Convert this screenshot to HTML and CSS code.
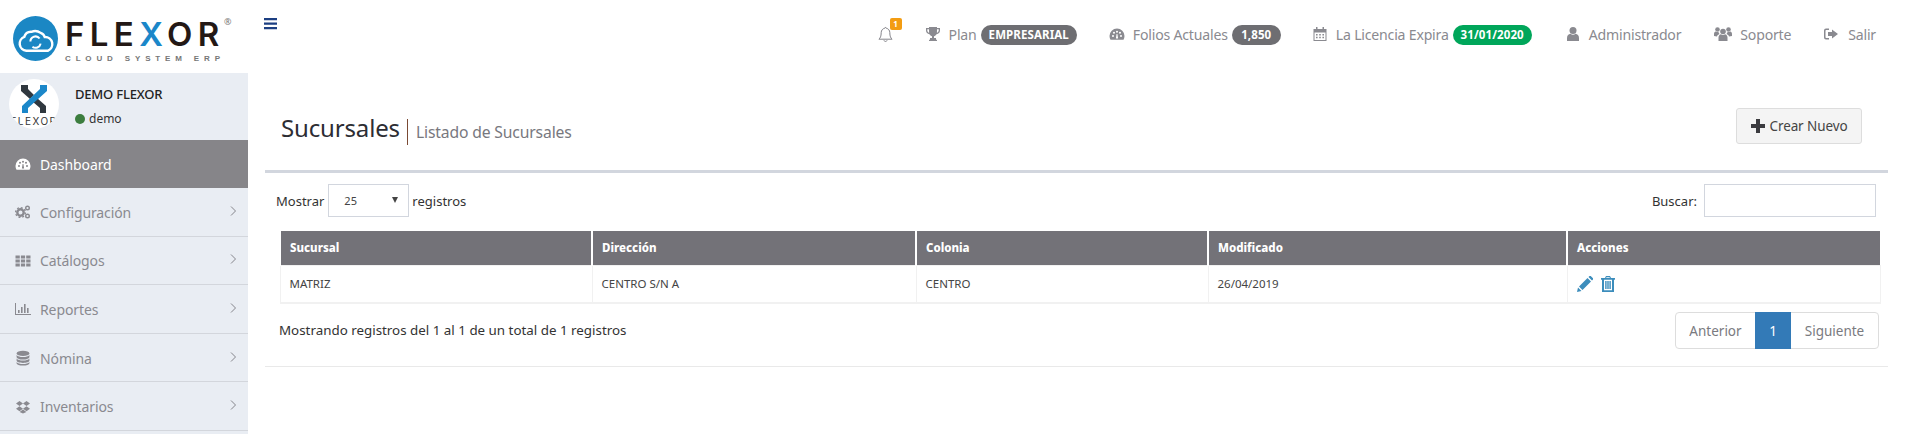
FILE: index.html
```html
<!DOCTYPE html>
<html lang="es">
<head>
<meta charset="utf-8">
<title>Sucursales</title>
<link rel="stylesheet" href="styles.css">
</head>
<body>
<div class="app">
  <aside class="sidebar">
    <div class="brand">
      <svg class="brand-mark" viewBox="0 0 44 44" width="45" height="45"><circle cx="22" cy="22" r="22" fill="#1b87c4"/><path d="M13 34a7 7 0 0 1-2-13.500 7 7 0 0 1 7-5 9 9 0 0 1 9 1 6 6 0 0 1 4 4 7 7 0 0 1 3 13.500z" fill="none" stroke="#fff" stroke-width="2.400"/><path d="M17 25a5 5 0 0 1 9-3M27 27a5 5 0 0 1-8 3" fill="none" stroke="#fff" stroke-width="2"/></svg>
      <div class="brand-text">
        <div class="brand-name">FLE<span class="brand-x">X</span>OR</div>
        <div class="brand-sub">CLOUD SYSTEM ERP</div>
      </div>
      <sup class="brand-reg">®</sup>
    </div>
    <div class="user-panel">
      <div class="avatar">
        <svg viewBox="0 0 50 34" width="50" height="34"><path d="M12 4h7v4l6 6-4 4-9-8zM28 17l9 8v7h-6v-5l-7-6z" fill="#30383f"/><path d="M38 4h-7v4L13 25v7h6v-5l19-17z" fill="#1b87c9"/></svg>
        <div class="avatar-word">FLEXOR</div>
      </div>
      <div class="user-info">
        <div class="user-name">DEMO FLEXOR</div>
        <div class="user-status"><span class="dot"></span>demo</div>
      </div>
    </div>
    <nav class="menu">
      <a class="menu-item active">
        <svg class="menu-icon" viewBox="0 0 16 16"><path d="M8 2.500a7.500 7.500 0 0 0-7.500 7.500c0 1.400.4 2.700 1 3.700h13c.6-1 1-2.300 1-3.700A7.500 7.500 0 0 0 8 2.500zM4 11a1 1 0 1 1 0-2 1 1 0 0 1 0 2zm1-3.200a1 1 0 1 1 0-2 1 1 0 0 1 0 2zm3-1a1 1 0 1 1 0-2 1 1 0 0 1 0 2zm1.100 5.600H6.900L7.600 8h.8zM11 7.800a1 1 0 1 1 0-2 1 1 0 0 1 0 2zm1 3.200a1 1 0 1 1 0-2 1 1 0 0 1 0 2z" fill-rule="evenodd"/></svg>
        <span>Dashboard</span>
      </a>
      <a class="menu-item">
        <svg class="menu-icon" viewBox="0 0 16 16"><circle cx="5.500" cy="8.500" r="3.200" fill="none" stroke="currentColor" stroke-width="2.400"/><circle cx="5.500" cy="8.500" r="4.900" fill="none" stroke="currentColor" stroke-width="1.400" stroke-dasharray="1.900 1.900"/><circle cx="12.500" cy="4" r="1.800" fill="none" stroke="currentColor" stroke-width="1.400"/><circle cx="12.500" cy="12" r="1.800" fill="none" stroke="currentColor" stroke-width="1.400"/></svg>
        <span>Configuración</span>
        <svg class="chev" viewBox="0 0 8 12"><path d="M2 1.500l4.500 4.500L2 10.500" fill="none" stroke="currentColor" stroke-width="1"/></svg>
      </a>
      <a class="menu-item">
        <svg class="menu-icon" viewBox="0 0 16 16"><path d="M.5 2.500h4.300v3H.5zM5.900 2.500h4.200v3H5.900zM11.200 2.500h4.300v3h-4.300zM.5 6.500h4.300v3H.5zM5.900 6.500h4.200v3H5.900zM11.200 6.500h4.300v3h-4.300zM.5 10.500h4.300v3H.5zM5.900 10.500h4.200v3H5.900zM11.200 10.500h4.300v3h-4.300z"/></svg>
        <span>Catálogos</span>
        <svg class="chev" viewBox="0 0 8 12"><path d="M2 1.500l4.500 4.500L2 10.500" fill="none" stroke="currentColor" stroke-width="1"/></svg>
      </a>
      <a class="menu-item">
        <svg class="menu-icon" viewBox="0 0 16 16"><path d="M0 2h1v11h15v1H0zM3 9h1.600v3H3zM6 6h1.600v6H6zM9 3h1.600v9H9zM12 7h1.600v5H12z"/></svg>
        <span>Reportes</span>
        <svg class="chev" viewBox="0 0 8 12"><path d="M2 1.500l4.500 4.500L2 10.500" fill="none" stroke="currentColor" stroke-width="1"/></svg>
      </a>
      <a class="menu-item">
        <svg class="menu-icon" viewBox="0 0 16 16"><ellipse cx="8" cy="3.400" rx="6.400" ry="2.600"/><path d="M1.600 5v2C1.600 8.400 4.500 9.600 8 9.600s6.400-1.200 6.400-2.600V5C13.400 6.500 10.800 7 8 7S2.600 6.500 1.600 5zM1.600 8.600v2c0 1.400 2.900 2.400 6.400 2.400s6.400-1 6.400-2.400v-2c-1 1.500-3.600 2-6.400 2s-5.400-.5-6.400-2zM1.600 12v1.200c0 1.400 2.900 2.300 6.400 2.300s6.400-.9 6.400-2.300V12c-1 1.500-3.600 2-6.400 2s-5.400-.5-6.400-2z"/></svg>
        <span>Nómina</span>
        <svg class="chev" viewBox="0 0 8 12"><path d="M2 1.500l4.500 4.500L2 10.500" fill="none" stroke="currentColor" stroke-width="1"/></svg>
      </a>
      <a class="menu-item">
        <svg class="menu-icon" viewBox="0 0 16 16"><path d="M4.500 2L8 4.500 4.500 7 1 4.500zM11.500 2L15 4.500 11.500 7 8 4.500zM4.500 7.200L8 9.700l-3.500 2.500L1 9.700zM11.500 7.200L15 9.700l-3.500 2.500L8 9.700zM8 10.500l3.400 2.400L8 14.500l-3.400-1.600z"/></svg>
        <span>Inventarios</span>
        <svg class="chev" viewBox="0 0 8 12"><path d="M2 1.500l4.500 4.500L2 10.500" fill="none" stroke="currentColor" stroke-width="1"/></svg>
      </a>
    </nav>
  </aside>
  <main class="main">
    <header class="topbar">
      <svg class="burger" viewBox="0 0 14 12" width="14" height="12"><path d="M0 0h13v2.300H0zM0 4.500h13v2.300H0zM0 9h13v2.300H0z"/></svg>
      <div class="top-items">
        <div class="top-item bell-item">
          <svg class="top-icon bell" viewBox="0 0 16 18"><path d="M8 1.500c-.5 0-.8.400-.8.800C5 2.700 3.400 4.600 3.400 7c0 4-1 5.700-2.400 7h14c-1.400-1.300-2.400-3-2.400-7 0-2.400-1.600-4.300-3.800-4.700 0-.4-.3-.8-.8-.8zM6.300 15.200a1.800 1.800 0 0 0 3.400 0" fill="none" stroke="currentColor" stroke-width="1"/></svg>
          <span class="notif">1</span>
        </div>
        <div class="top-item plan">
          <svg class="top-icon" viewBox="0 0 16 16"><path d="M4 1h8v1h3v2.500c0 2-1.500 3.500-3.500 3.800C10.900 9.200 10 10 9 10.200V12h2v1.500l1 .5v1H4v-1l1-.5V12h2v-1.800C6 10 5.100 9.200 4.500 8.300 2.500 8 1 6.500 1 4.500V2h3zM2.300 3.300v1.200c0 1 .7 1.900 1.800 2.300-.1-1-.1-2.300-.1-3.500zm11.400 0H12c0 1.200 0 2.500-.1 3.500 1.100-.4 1.800-1.300 1.800-2.300z" fill-rule="evenodd"/></svg>
          <span>Plan</span><span class="pill grey">EMPRESARIAL</span>
        </div>
        <div class="top-item folios">
          <svg class="top-icon" viewBox="0 0 16 16"><path d="M8 2.500a7.500 7.500 0 0 0-7.500 7.500c0 1.400.4 2.700 1 3.700h13c.6-1 1-2.300 1-3.700A7.500 7.500 0 0 0 8 2.500zM4 11a1 1 0 1 1 0-2 1 1 0 0 1 0 2zm1-3.200a1 1 0 1 1 0-2 1 1 0 0 1 0 2zm3-1a1 1 0 1 1 0-2 1 1 0 0 1 0 2zm1.100 5.600H6.900L7.600 8h.8zM11 7.800a1 1 0 1 1 0-2 1 1 0 0 1 0 2zm1 3.200a1 1 0 1 1 0-2 1 1 0 0 1 0 2z" fill-rule="evenodd"/></svg>
          <span>Folios Actuales</span><span class="pill grey num">1,850</span>
        </div>
        <div class="top-item licencia">
          <svg class="top-icon" viewBox="0 0 16 16"><path d="M1.500 3H4V1h1.500v2h5V1H12v2h2.500v12h-13zM2.500 6.500v7.500h11V6.500zM4 8h1.600v1.400H4zM7.200 8h1.600v1.400H7.200zM10.400 8H12v1.400h-1.600zM4 10.800h1.600v1.400H4zM7.200 10.800h1.600v1.400H7.200zM10.400 10.800H12v1.400h-1.600z" fill-rule="evenodd"/></svg>
          <span>La Licencia Expira</span><span class="pill green">31/01/2020</span>
        </div>
        <div class="top-item admin">
          <svg class="top-icon" viewBox="0 0 16 16"><circle cx="8" cy="4.500" r="3.500"/><path d="M2 15v-3c0-2.500 1.500-4 3.500-4.300C6.200 8.300 7 8.700 8 8.700s1.800-.4 2.500-1c2 .3 3.500 1.800 3.500 4.300v3z"/></svg>
          <span>Administrador</span>
        </div>
        <div class="top-item soporte">
          <svg class="top-icon users" viewBox="0 0 18 16"><circle cx="9" cy="5.500" r="2.800"/><circle cx="3.500" cy="3.500" r="2.300"/><circle cx="14.500" cy="3.500" r="2.300"/><path d="M4.500 15v-3.500c0-2 1.300-3 2.500-3.200.5.400 1.200.7 2 .7s1.500-.3 2-.7c1.200.2 2.500 1.200 2.500 3.200V15zM0 10V8c0-1.500.800-2.300 1.800-2.500.5.400 1.100.6 1.700.6h1c.1.800.4 1.500 1 2-1.200.5-2.200 1.200-2.500 2.400zM18 10V8c0-1.500-.8-2.300-1.800-2.500-.5.400-1.100.6-1.700.6h-1c-.1.800-.4 1.500-1 2 1.200.5 2.200 1.200 2.500 2.400z"/></svg>
          <span>Soporte</span>
        </div>
        <div class="top-item salir">
          <svg class="top-icon" viewBox="0 0 16 16"><path d="M6 2.500H3A2 2 0 0 0 1 4.500v7a2 2 0 0 0 2 2h3v-1.500H3.200a.7.7 0 0 1-.7-.7V4.700c0-.4.300-.7.700-.7H6z"/><path d="M9 3.500l6 4.500-6 4.500V10H5V6h4z"/></svg>
          <span>Salir</span>
        </div>
      </div>
    </header>
    <section class="page-head">
      <h1 class="title">Sucursales</h1>
      <span class="subtitle">Listado de Sucursales</span>
      <button class="btn-new" type="button">
        <svg viewBox="0 0 14 14" width="14" height="14"><path d="M5 0h4v5h5v4H9v5H5V9H0V5h5z"/></svg>
        Crear Nuevo
      </button>
    </section>
    <section class="box">
      <div class="controls">
        <label class="length">Mostrar
          <span class="fake-select">25<i class="caret"></i></span>
          registros</label>
        <label class="search">Buscar:
          <input class="search-input" type="text">
        </label>
      </div>
      <table class="grid">
        <colgroup><col class="c1"><col class="c2"><col class="c3"><col class="c4"><col class="c5"></colgroup>
        <thead>
          <tr><th>Sucursal</th><th>Dirección</th><th>Colonia</th><th>Modificado</th><th>Acciones</th></tr>
        </thead>
        <tbody>
          <tr>
            <td>MATRIZ</td><td>CENTRO S/N A</td><td>CENTRO</td><td>26/04/2019</td>
            <td class="actions">
              <svg viewBox="0 0 16 16" width="16" height="16"><path d="M0 16l1-4.500 3.500 3.500zM2 10.500L10.500 2l3.500 3.500L5.500 14zM11.500 1l1-1a1 1 0 0 1 1.200 0l2.300 2.300a1 1 0 0 1 0 1.200l-1 1z"/></svg>
              <svg viewBox="0 0 14 16" width="14" height="16"><path d="M5 0h4l1 2h4v1.800h-1V16H1V3.800H0V2h4zM5.500 1.200L5.100 2h3.800l-.4-.8zM3 3.800v10.400h8V3.800zM4.200 5h1.400v8H4.200zM6.300 5h1.400v8H6.300zM8.400 5h1.400v8H8.400z" fill-rule="evenodd"/></svg>
            </td>
          </tr>
        </tbody>
      </table>
      <div class="foot">
        <div class="info">Mostrando registros del 1 al 1 de un total de 1 registros</div>
        <div class="pager">
          <a class="page">Anterior</a><a class="page current">1</a><a class="page">Siguiente</a>
        </div>
      </div>
    </section>
  </main>
</div>
</body>
</html>
```
FILE: styles.css
```css
* { box-sizing: border-box; }
html, body { margin: 0; height: 434px; overflow: hidden; background: #fff; }
body { font-family: "Noto Sans", "Liberation Sans", sans-serif; font-size: 13px; color: #333; }
.app { display: flex; height: 434px; overflow: hidden; }

.sidebar { width: 248px; flex: none; display: flex; flex-direction: column; background: #fff; }
.brand { height: 73px; flex: none; display: flex; align-items: flex-start; padding: 16px 0 0 13px; position: relative; }
.brand-mark { flex: none; }
.brand-text { margin-left: 7px; width: 160px; }
.brand-name { font-family: "Inter", sans-serif; font-weight: 600; font-size: 33px; line-height: 30px; letter-spacing: 5.400px; color: #231815; white-space: nowrap; margin-top: 3px; }
.brand-x { color: #1b87c9; }
.brand-sub { font-family: "Liberation Sans", sans-serif; font-size: 8px; line-height: 9px; letter-spacing: 4.850px; color: #777; white-space: nowrap; margin-top: 5px; font-weight: 700; }
.brand-reg { position: absolute; left: 224px; top: 17px; font-size: 9px; line-height: 9px; color: #777; margin: 0; }

.user-panel { height: 67px; flex: none; background: #e9edf3; display: flex; padding: 6px 0 0 9px; }
.avatar { width: 50px; height: 50px; border-radius: 50%; background: #fff; overflow: hidden; flex: none; text-align: center; }
.avatar svg { display: block; margin-top: 2px; }
.avatar-word { font-family: "Inter", sans-serif; font-size: 10px; line-height: 12px; letter-spacing: 1.500px; color: #333; white-space: nowrap; }
.user-info { margin-left: 16px; }
.user-name { font-size: 13px; line-height: 18px; margin-top: 6px; color: #222; font-weight: 500; letter-spacing: -.2px; }
.user-status { display: flex; align-items: center; font-size: 12px; line-height: 16px; margin-top: 8px; color: #333; }
.dot { width: 10px; height: 10px; border-radius: 50%; background: #3c7d3e; margin-right: 4px; }

.menu { display: flex; flex-direction: column; background: #e9edf3; flex: 1; }
.menu-item { height: 48.600px; flex: none; display: flex; align-items: center; padding: 1px 11px 0 15px; color: #8a8a90; font-size: 14px; border-bottom: 1px solid #d3d6dc; }
.menu-item span { margin-left: 9px; letter-spacing: -.1px; }
.menu-item.active { background: #868589; color: #fff; height: 48px; border-bottom: 0; padding-top: 0; }
.menu-icon { width: 16px; height: 16px; fill: currentColor; flex: none; }
.chev { width: 8px; height: 12px; margin-left: auto; margin-top: -3px; color: #85858b; }

.main { flex: 1; min-width: 0; display: flex; flex-direction: column; }
.topbar { height: 73px; display: flex; align-items: flex-start; padding: 18px 39px 0 16px; flex: none; }
.burger { fill: #1c3f82; flex: none; }
.top-items { margin-left: auto; display: flex; align-items: center; margin-top: 6px; height: 20px; color: #8a8a90; font-size: 14.100px; letter-spacing: -.2px; }
.top-item { display: flex; align-items: center; white-space: nowrap; position: relative; }
.top-icon { width: 16px; height: 16px; fill: #8a8a90; flex: none; margin-right: 8px; }
.bell { width: 15px; height: 17px; fill: none; color: #7c7c82; margin-right: 0; }
.notif { position: absolute; left: 12px; top: -8px; width: 12px; height: 12px; border-radius: 2px; background: #f39c12; color: #fff; font-size: 8px; font-weight: 700; line-height: 12px; text-align: center; letter-spacing: 0; }
.plan { margin-left: 32px; }
.folios { margin-left: 32px; }
.licencia { margin-left: 31px; }
.admin { margin-left: 33px; }
.soporte { margin-left: 33px; }
.salir { margin-left: 32px; }
.users { width: 18px; }
.salir .top-icon { margin-right: 9px; }
.pill { margin-left: 4px; height: 20px; margin-top: 1px; border-radius: 10px; color: #fff; font-weight: 700; font-size: 11.500px; line-height: 20px; padding: 0 8px; letter-spacing: .1px; }
.pill.num { padding: 0 9.500px; }
.pill.grey { background: #6e6e72; }
.pill.green { background: #00a65a; }

.page-head { height: 97px; flex: none; display: flex; align-items: flex-start; padding: 35px 26px 0 33px; margin-right: 27px; }
.title { margin: 0; font-weight: 400; font-size: 24px; line-height: 34px; margin-top: 3px; color: #2d2d33; letter-spacing: -.15px; }
.subtitle { margin-left: 7px; padding-left: 8px; border-left: 1px solid #7a4a34; font-size: 15.700px; line-height: 26px; margin-top: 11px; color: #78787e; letter-spacing: -.15px; }
.btn-new { margin-left: auto; width: 126px; height: 36px; display: flex; align-items: center; justify-content: center; gap: 5px; background: #f4f4f4; border: 1px solid #ddd; border-radius: 3px; color: #444; font: inherit; font-size: 13.500px; padding: 0; margin-top: 0; letter-spacing: -.1px; }
.btn-new svg { fill: #3b3b3f; }

.box { margin: 0 27px 0 17px; height: 197px; border-top: 3px solid #d2d6de; border-bottom: 1px solid #e9e9e9; padding: 11px 12px 0 11px; flex: none; }
.controls { display: flex; justify-content: space-between; align-items: center; height: 33px; font-size: 13px; color: #333; }
.length, .search { display: flex; align-items: center; }
.fake-select { position: relative; display: block; width: 81px; height: 33px; margin: 0 3px 0 4px; border: 1px solid #d2d6de; font-size: 11px; line-height: 31px; padding-left: 15px; color: #444; }
.caret { position: absolute; right: 10px; top: 12px; border: 3.500px solid transparent; border-top: 6px solid #444; border-bottom: 0; }
.search-input { width: 172px; height: 33px; margin: 0 0 0 7px; border: 1px solid #d2d6de; background: #fff; padding: 0; display: block; }

.grid { border-collapse: collapse; table-layout: fixed; width: 1600px; margin: 14px 0 0 3px; font-size: 11.500px; }
.c1 { width: 312px; } .c2 { width: 324px; } .c3 { width: 292px; } .c4 { width: 359px; } .c5 { width: 313px; }
.grid th { height: 34px; background: #737278; color: #fff; font-weight: 800; text-align: left; padding: 0 9px; border-right: 2px solid #fff; border-left: 2px solid #fff; }
.grid th:last-child { border-right: 0; }
.grid td { height: 38px; padding: 0 9px; border: 1px solid #f1f1f1; border-bottom: 2px solid #f1f1f1; color: #444; }
.actions svg { fill: #3c8dbc; vertical-align: middle; margin-right: 5px; }

.foot { display: flex; justify-content: space-between; align-items: center; margin: 8px 0 0 3px; width: 1600px; }
.info { font-size: 13.370px; color: #333; margin-top: -1px; }
.pager { display: flex; height: 37px; border: 1px solid #ddd; border-radius: 4px; color: #7a7a80; font-size: 13.500px; }
.page { display: flex; align-items: center; justify-content: center; width: 79px; }
.page:last-child { width: 87px; }
.page.current { width: 36px; margin: -1px 0; background: #337ab7; color: #fff; }
```
